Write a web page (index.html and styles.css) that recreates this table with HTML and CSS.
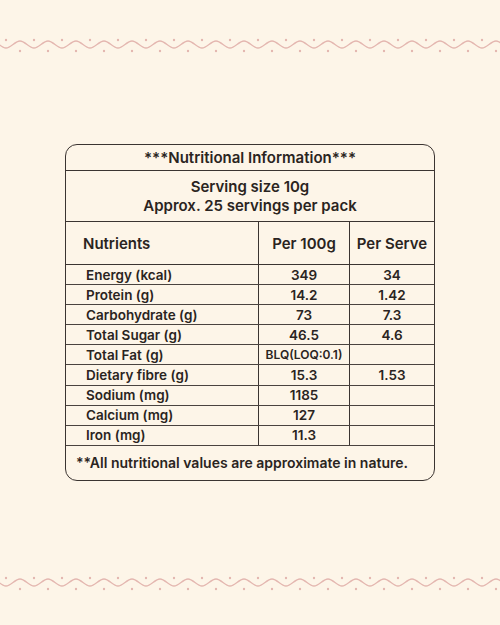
FILE: index.html
```html
<!DOCTYPE html>
<html>
<head>
<meta charset="utf-8">
<link rel="stylesheet" href="styles.css">
</head>
<body>
<div class="page">
  <svg class="wave wave-top" width="500" height="20" viewBox="0 0 500 20">
    <defs>
      <pattern id="w1" x="-8" y="0" width="28" height="20" patternUnits="userSpaceOnUse">
        <path d="M0 5 C5 5 9 12 14 12 C19 12 23 5 28 5" fill="none" stroke="#e4b7b0" stroke-width="1.4"/>
        <circle cx="14" cy="4" r="1.2" fill="#e4b7b0"/>
        <circle cx="0" cy="15" r="1.2" fill="#e4b7b0"/>
        <circle cx="28" cy="15" r="1.2" fill="#e4b7b0"/>
      </pattern>
    </defs>
    <rect width="500" height="20" fill="url(#w1)"/>
  </svg>

  <div class="card">
    <div class="title">***Nutritional Information***</div>
    <div class="serving">
      <div>Serving size 10g</div>
      <div>Approx. 25 servings per pack</div>
    </div>
    <div class="grid head">
      <div class="cell name">Nutrients</div>
      <div class="cell num">Per 100g</div>
      <div class="cell num">Per Serve</div>
    </div>
    <div class="grid row">
      <div class="cell name">Energy (kcal)</div>
      <div class="cell num">349</div>
      <div class="cell num">34</div>
    </div>
    <div class="grid row">
      <div class="cell name">Protein (g)</div>
      <div class="cell num">14.2</div>
      <div class="cell num">1.42</div>
    </div>
    <div class="grid row">
      <div class="cell name">Carbohydrate (g)</div>
      <div class="cell num">73</div>
      <div class="cell num">7.3</div>
    </div>
    <div class="grid row">
      <div class="cell name">Total Sugar (g)</div>
      <div class="cell num">46.5</div>
      <div class="cell num">4.6</div>
    </div>
    <div class="grid row">
      <div class="cell name">Total Fat (g)</div>
      <div class="cell num small">BLQ(LOQ:0.1)</div>
      <div class="cell num"></div>
    </div>
    <div class="grid row">
      <div class="cell name">Dietary fibre (g)</div>
      <div class="cell num">15.3</div>
      <div class="cell num">1.53</div>
    </div>
    <div class="grid row">
      <div class="cell name">Sodium (mg)</div>
      <div class="cell num">1185</div>
      <div class="cell num"></div>
    </div>
    <div class="grid row">
      <div class="cell name">Calcium (mg)</div>
      <div class="cell num">127</div>
      <div class="cell num"></div>
    </div>
    <div class="grid row">
      <div class="cell name">Iron (mg)</div>
      <div class="cell num">11.3</div>
      <div class="cell num"></div>
    </div>
    <div class="note">**All nutritional values are approximate in nature.</div>
  </div>

  <svg class="wave wave-bottom" width="500" height="20" viewBox="0 0 500 20">
    <defs>
      <pattern id="w2" x="-8" y="0" width="28" height="20" patternUnits="userSpaceOnUse">
        <path d="M0 5 C5 5 9 12 14 12 C19 12 23 5 28 5" fill="none" stroke="#e4b7b0" stroke-width="1.4"/>
        <circle cx="14" cy="4" r="1.2" fill="#e4b7b0"/>
        <circle cx="0" cy="15" r="1.2" fill="#e4b7b0"/>
        <circle cx="28" cy="15" r="1.2" fill="#e4b7b0"/>
      </pattern>
    </defs>
    <rect width="500" height="20" fill="url(#w2)"/>
  </svg>
</div>
</body>
</html>
```

FILE: styles.css
```css
html, body {
  margin: 0;
  padding: 0;
  background: #fdf5e8;
}
body {
  width: 500px;
  height: 625px;
  overflow: hidden;
  font-family: Inter, "Liberation Sans", sans-serif;
  color: #2a2421;
}
.page {
  display: flex;
  flex-direction: column;
  align-items: center;
}
.wave {
  display: block;
}
.wave-top {
  margin-top: 36px;
}
.wave-bottom {
  margin-top: 93px;
}
.card {
  margin-top: 88px;
  width: 370px;
  border: 1.5px solid #3b3431;
  border-radius: 12px;
  box-sizing: border-box;
  font-weight: 600;
}
.title {
  height: 25px;
  display: flex;
  align-items: center;
  justify-content: center;
  font-size: 15px;
  border-bottom: 1.5px solid #3b3431;
}
.serving {
  height: 50px;
  display: flex;
  flex-direction: column;
  justify-content: center;
  align-items: center;
  font-size: 15px;
  line-height: 19px;
  border-bottom: 1.5px solid #3b3431;
}
.grid {
  display: grid;
  grid-template-columns: 193px 91px 1fr;
}
.cell {
  display: flex;
  align-items: center;
  border-right: 1px solid #3b3431;
}
.cell:last-child {
  border-right: none;
}
.num {
  justify-content: center;
}
.head {
  height: 42px;
  font-size: 15px;
  border-bottom: 1.5px solid #3b3431;
}
.head .name {
  padding-left: 17px;
}
.row {
  height: 20.1px;
  font-size: 13.5px;
  border-bottom: 1px solid #4a433f;
  box-sizing: border-box;
}
.row .name {
  padding-left: 20px;
}
.small {
  font-size: 12px;
}
.note {
  height: 34px;
  display: flex;
  align-items: center;
  padding-left: 10px;
  font-size: 14px;
}
```
